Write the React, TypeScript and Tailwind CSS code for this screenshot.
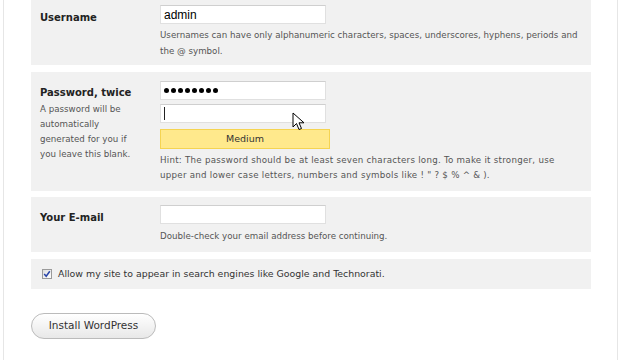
import React from 'react';

const font = { fontFamily: '"DejaVu Sans", Verdana, sans-serif' };

const Panel: React.FC<{ className?: string; children: React.ReactNode }> = ({ className = '', children }) => (
  <div className={`bg-[#f1f1f1] flex ${className}`}>{children}</div>
);

const TextBox: React.FC<{ className?: string; children?: React.ReactNode }> = ({ className = '', children }) => (
  <div
    className={`w-[166px] h-[19px] bg-white border border-[#e0e0e0] border-t-[#cfcfcf] flex items-center px-[3px] ${className}`}
  >
    {children}
  </div>
);

const Cursor = () => (
  <svg className="absolute left-[292px] top-[112px]" width="14" height="20" viewBox="0 0 14 20">
    <path
      d="M1 1 L1 15 L4.5 11.5 L7 17.5 L9.5 16.5 L7 10.8 L12 10.8 Z"
      fill="#fff"
      stroke="#000"
      strokeWidth="1"
      strokeLinejoin="round"
    />
  </svg>
);

export default function App() {
  return (
    <div className="w-[621px] h-[360px] bg-white overflow-hidden relative text-[#333]" style={font}>
      <div className="ml-[3px] w-[615px] h-full border-l border-r border-[#e6e6e6] pl-[27px]">
        <div className="w-[560px] flex flex-col">
          {/* Username */}
          <Panel className="pt-[5px] pb-[6px]">
            <div className="w-[129px] pl-[9px] pt-[5px] text-[10px] font-bold text-[#222]">Username</div>
            <div className="flex flex-col">
              <TextBox>
                <span className="text-[12px] text-black" style={{ fontFamily: '"Liberation Sans", Arial, sans-serif' }}>
                  admin
                </span>
              </TextBox>
              <p className="mt-[3px] text-[8.7px] leading-[16px] text-[#555] w-[425px]">
                Usernames can have only alphanumeric characters, spaces, underscores, hyphens, periods and the @ symbol.
              </p>
            </div>
          </Panel>

          {/* Password */}
          <Panel className="mt-[7px] pt-[9px] pb-[8px]">
            <div className="w-[129px] pl-[9px] pt-[4px]">
              <div className="text-[10px] font-bold text-[#222] leading-[15px]">Password, twice</div>
              <p className="mt-[2px] text-[8.7px] leading-[15px] text-[#555] w-[98px]">
                A password will be automatically generated for you if you leave this blank.
              </p>
            </div>
            <div className="flex flex-col">
              <TextBox className="h-[18px] gap-[2px]">
                {[0, 1, 2, 3, 4, 5, 6, 7].map((i) => (
                  <span key={i} className="w-[5px] h-[5px] rounded-full bg-black" />
                ))}
              </TextBox>
              <TextBox className="mt-[4px] border-[#8fb3d9] border-t-[#7ea3cc]">
                <span className="w-px h-[13px] bg-[#222]" />
              </TextBox>
              <div className="mt-[6px] w-[170px] h-[20px] bg-[#ffe98c] border border-[#f5d451] flex items-center justify-center text-[9.5px] text-[#333]">
                Medium
              </div>
              <p className="mt-[4px] text-[8.7px] tracking-[0.25px] leading-[15px] text-[#555] w-[410px]">
                Hint: The password should be at least seven characters long. To make it stronger, use upper and lower case
                letters, numbers and symbols like ! " ? $ % ^ &amp; ).
              </p>
            </div>
          </Panel>

          {/* Email */}
          <Panel className="mt-[6px] pt-[8px] pb-[8px]">
            <div className="w-[129px] pl-[9px] pt-[5px] text-[10px] font-bold text-[#222]">Your E-mail</div>
            <div className="flex flex-col">
              <TextBox />
              <p className="mt-[4px] text-[8.7px] leading-[16px] text-[#555]">
                Double-check your email address before continuing.
              </p>
            </div>
          </Panel>

          {/* Privacy */}
          <Panel className="mt-[7px] h-[30px] items-center pl-[11px]">
            <span className="w-[10px] h-[10px] border border-[#9a9a9a] bg-gradient-to-br from-[#dedede] to-white flex items-center justify-center">
              <svg width="8" height="8" viewBox="0 0 8 8">
                <path d="M1.2 4 L3.2 6.3 L6.8 1.2" fill="none" stroke="#2a45a8" strokeWidth="1.5" />
              </svg>
            </span>
            <span className="ml-[6px] text-[9.4px] text-[#333]">
              Allow my site to appear in search engines like Google and Technorati.
            </span>
          </Panel>

          {/* Submit */}
          <div className="mt-[23px]">
            <button className="w-[125px] h-[26px] rounded-full border border-[#bbb] bg-gradient-to-b from-white to-[#e8e8e8] text-[10.5px] text-[#333]">
              Install WordPress
            </button>
          </div>
        </div>
      </div>
      <Cursor />
    </div>
  );
}
